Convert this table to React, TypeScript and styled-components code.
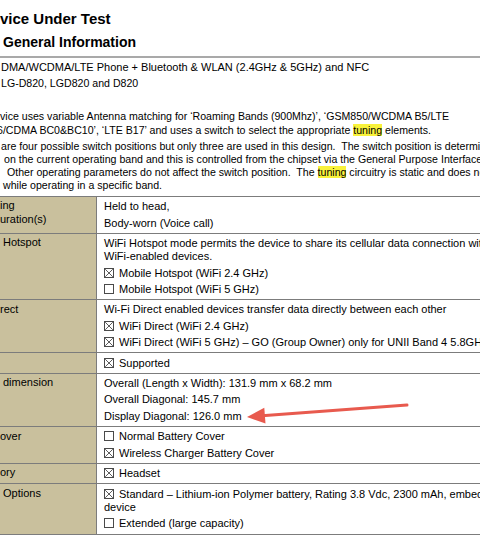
import React from "react";
import styled, { createGlobalStyle } from "styled-components";

const Global = createGlobalStyle`
  html, body { margin: 0; padding: 0; background: #fff; }
  body { font-family: "Liberation Sans", Arial, Helvetica, sans-serif; color: #000; }
`;

const Page = styled.div`
  position: relative;
  width: 480px;
  height: 540px;
  overflow: hidden;
  background: #fff;
`;

const Title = styled.h1`
  margin: 10px 0 0;
  font-size: 15px;
  line-height: 17px;
  font-weight: 700;
  white-space: nowrap;
`;

const Subtitle = styled.h2`
  margin: 7px 0 0 3px;
  font-size: 14px;
  line-height: 16px;
  font-weight: 700;
  white-space: nowrap;
`;

const Rule = styled.hr`
  margin: 6px 0 0;
  border: 0;
  height: 2px;
  background: #a9a9a9;
`;

const Prose = styled.div`
  font-size: 11px;
  line-height: 13.3px;
`;

const Para = styled.p<{ $gap: number; $size?: number }>`
  margin: ${(p) => p.$gap}px 0 0;
  font-size: ${(p) => p.$size ?? 11}px;
`;

const Line = styled.span<{ $indent?: number }>`
  display: block;
  white-space: pre;
  margin-left: ${(p) => p.$indent ?? 0}px;
`;

const Mark = styled.mark`
  background: #f9f23b;
  color: inherit;
  padding: 0;
`;

const Table = styled.div`
  margin-top: 3.25px;
  width: 760px;
  border-top: 1px solid #7c7c7c;
  display: grid;
  grid-template-columns: 97px 1fr;
  font-size: 11px;
  line-height: 13.3px;
`;

const LabelCell = styled.div<{ $indent?: number }>`
  background: #c9c09d;
  border-right: 1px solid #7c7c7c;
  border-bottom: 1px solid #7c7c7c;
  padding: 2.5px 0 0 ${(p) => p.$indent ?? 0}px;
  white-space: pre;
`;

const ValueCell = styled.div`
  border-bottom: 1px solid #7c7c7c;
  padding: 3.25px 7px 3px;
  display: flex;
  flex-direction: column;
  gap: 3px;
`;

const Item = styled.div`
  white-space: nowrap;
`;

const BoxSvg = styled.svg`
  width: 10px;
  height: 10px;
  vertical-align: -1px;
  margin-right: 5px;
`;

const ArrowLayer = styled.svg`
  position: absolute;
  left: 0;
  top: 0;
  width: 480px;
  height: 540px;
  pointer-events: none;
`;

function Box({ checked }: { checked?: boolean }) {
  return (
    <BoxSvg viewBox="0 0 10 10">
      <rect x="0.5" y="0.5" width="9" height="9" fill="#fff" stroke="#4a4a4a" strokeWidth="1" />
      {checked && <path d="M1.2 1.2L8.8 8.8M8.8 1.2L1.2 8.8" stroke="#4a4a4a" strokeWidth="0.9" />}
    </BoxSvg>
  );
}

export default function App() {
  return (
    <>
      <Global />
      <Page>
        <Title>vice Under Test</Title>
        <Subtitle>General Information</Subtitle>
        <Rule />
        <Prose>
          <Para $gap={3.25}>
            <Line $indent={1}>DMA/WCDMA/LTE Phone + Bluetooth &amp; WLAN (2.4GHz &amp; 5GHz) and NFC</Line>
          </Para>
          <Para $gap={2.3} $size={10.6}>
            <Line $indent={1}>LG-D820, LGD820 and D820</Line>
          </Para>
          <Para $gap={20.1} $size={10.6}>
            <Line>vice uses variable Antenna matching for ‘Roaming Bands (900Mhz)’, ‘GSM850/WCDMA B5/LTE</Line>
            <Line $indent={-3}>
              6/CDMA BC0&amp;BC10’, ‘LTE B17’ and uses a switch to select the appropriate <Mark>tuning</Mark> elements.
            </Line>
          </Para>
          <Para $gap={2.7} $size={10.6}>
            <Line $indent={1}>are four possible switch positions but only three are used in this design.  The switch position is determined by</Line>
            <Line $indent={4}>on the current operating band and this is controlled from the chipset via the General Purpose Interface (GPI).</Line>
            <Line $indent={7}>
              Other operating parameters do not affect the switch position.  The <Mark>tuning</Mark> circuitry is static and does not change
            </Line>
            <Line $indent={3}>while operating in a specific band.</Line>
          </Para>
        </Prose>
        <Table>
          <LabelCell>{"ing\nuration(s)"}</LabelCell>
          <ValueCell>
            <Item>Held to head,</Item>
            <Item>Body-worn (Voice call)</Item>
          </ValueCell>

          <LabelCell $indent={3}>Hotspot</LabelCell>
          <ValueCell>
            <Item>
              WiFi Hotspot mode permits the device to share its cellular data connection with other
              <br />
              WiFi-enabled devices.
            </Item>
            <Item>
              <Box checked />
              Mobile Hotspot (WiFi 2.4 GHz)
            </Item>
            <Item>
              <Box />
              Mobile Hotspot (WiFi 5 GHz)
            </Item>
          </ValueCell>

          <LabelCell>rect</LabelCell>
          <ValueCell>
            <Item>Wi-Fi Direct enabled devices transfer data directly between each other</Item>
            <Item>
              <Box checked />
              WiFi Direct (WiFi 2.4 GHz)
            </Item>
            <Item>
              <Box checked />
              WiFi Direct (WiFi 5 GHz) – GO (Group Owner) only for UNII Band 4 5.8GHz
            </Item>
          </ValueCell>

          <LabelCell />
          <ValueCell>
            <Item>
              <Box checked />
              Supported
            </Item>
          </ValueCell>

          <LabelCell $indent={3}>dimension</LabelCell>
          <ValueCell>
            <Item>Overall (Length x Width): 131.9 mm x 68.2 mm</Item>
            <Item>Overall Diagonal: 145.7 mm</Item>
            <Item>Display Diagonal: 126.0 mm</Item>
          </ValueCell>

          <LabelCell>over</LabelCell>
          <ValueCell>
            <Item>
              <Box />
              Normal Battery Cover
            </Item>
            <Item>
              <Box checked />
              Wireless Charger Battery Cover
            </Item>
          </ValueCell>

          <LabelCell>ory</LabelCell>
          <ValueCell>
            <Item>
              <Box checked />
              Headset
            </Item>
          </ValueCell>

          <LabelCell $indent={3}>Options</LabelCell>
          <ValueCell>
            <Item>
              <Box checked />
              Standard – Lithium-ion Polymer battery, Rating 3.8 Vdc, 2300 mAh, embedded in the
              <br />
              device
            </Item>
            <Item>
              <Box />
              Extended (large capacity)
            </Item>
          </ValueCell>
        </Table>
        <ArrowLayer viewBox="0 0 480 540">
          <line x1="407" y1="405" x2="262" y2="415.8" stroke="#e85a4e" strokeWidth="3" strokeLinecap="round" />
          <polygon points="247,417 264.3,407.7 265.5,423.6" fill="#e85a4e" />
        </ArrowLayer>
      </Page>
    </>
  );
}
